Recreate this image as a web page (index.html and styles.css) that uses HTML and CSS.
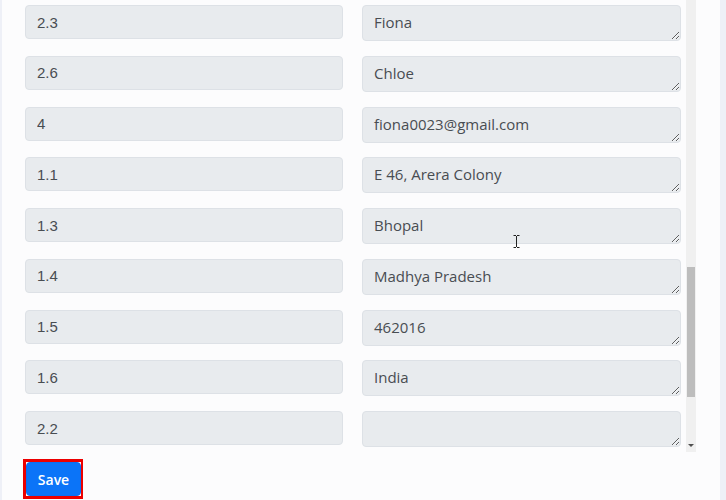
FILE: index.html
```html
<!DOCTYPE html>
<html lang="en">
<head>
    <meta charset="UTF-8">
    <title>Edit record</title>
    <link rel="stylesheet" href="styles.css">
</head>
<body>
<div class="page">
    <div class="scroller">
        <form class="fields">
            <input class="num" type="text" value="2.3" readonly>
            <textarea class="val" readonly>Fiona</textarea>
            <input class="num" type="text" value="2.6" readonly>
            <textarea class="val" readonly>Chloe</textarea>
            <input class="num" type="text" value="4" readonly>
            <textarea class="val" readonly>fiona0023@gmail.com</textarea>
            <input class="num" type="text" value="1.1" readonly>
            <textarea class="val" readonly>E 46, Arera Colony</textarea>
            <input class="num" type="text" value="1.3" readonly>
            <textarea class="val" readonly>Bhopal</textarea>
            <input class="num" type="text" value="1.4" readonly>
            <textarea class="val" readonly>Madhya Pradesh</textarea>
            <input class="num" type="text" value="1.5" readonly>
            <textarea class="val" readonly>462016</textarea>
            <input class="num" type="text" value="1.6" readonly>
            <textarea class="val" readonly>India</textarea>
            <input class="num" type="text" value="2.2" readonly>
            <textarea class="val" readonly></textarea>
        </form>
        <div class="bar">
            <div class="bar-top"></div>
            <div class="bar-thumb"></div>
            <div class="bar-rest"></div>
            <div class="bar-arrow"></div>
        </div>
    </div>
    <div class="actions">
        <span class="mark"><button class="save" type="button">Save</button></span>
    </div>
    <svg class="ibeam" width="7" height="13" viewBox="0 0 7 13">
        <path d="M0.5 0.5h2.5M4 0.5h2.5M3.5 1v11M0.5 12.5h2.5M4 12.5h2.5" stroke="#222" stroke-width="1" fill="none"/>
    </svg>
</div>
</body>
</html>
```

FILE: styles.css
```css
 *{
    box-sizing:border-box;
 }
 body{
    margin:0;
    background:#eef0f7;
 }
 .page{
    position:relative;
    margin:0 6px 0 2px;
    height:500px;
    background:#fcfcfd;
    overflow:hidden;
 }
 .scroller{
    display:flex;
    width:694px;
    height:452px;
 }
 .fields{
    flex:1;
    display:grid;
    grid-template-columns:318px 319px;
    grid-auto-rows:36px;
    column-gap:19px;
    row-gap:14.75px;
    align-items:start;
    align-content:start;
    padding:5px 0 0 23px;
    margin:0;
 }
 .num,
 .val{
    display:block;
    border:1px solid #dde1e6;
    border-radius:4px;
    background:#e8ebee;
    color:#484d52;
    padding:0 11px;
    margin:0;
    outline:none;
 }
 .num{
    height:34px;
    font-family:"Liberation Sans",Arial,sans-serif;
    font-size:15px;
 }
 .val{
    height:36px;
    resize:vertical;
    overflow:hidden;
    font-family:"Open Sans","Noto Sans",sans-serif;
    font-size:15px;
    line-height:22px;
    padding-top:5px;
 }
 .bar{
    width:10px;
    display:flex;
    flex-direction:column;
    background:#f0f0f0;
 }
 .bar-top{
    height:267px;
 }
 .bar-thumb{
    height:130px;
    margin:0 1px;
    background:#bdbdbd;
 }
 .bar-rest{
    flex:1;
 }
 .bar-arrow{
    height:14px;
    display:flex;
    justify-content:center;
    align-items:center;
 }
 .bar-arrow::after{
    content:"";
    border-left:3px solid transparent;
    border-right:3px solid transparent;
    border-top:3px solid #505050;
 }
 .actions{
    padding:7px 0 0 21px;
 }
 .mark{
    display:inline-block;
    border:3px solid #ec0000;
    border-right-width:2px;
    padding:0;
    line-height:0;
 }
 .save{
    width:55px;
    height:34px;
    border:1px solid #0b6ff2;
    border-radius:4px;
    background:#0b74f8;
    color:#fff;
    font-family:"Open Sans","Noto Sans",sans-serif;
    font-size:14px;
    font-weight:600;
    padding:0;
 }
 .ibeam{
    position:absolute;
    left:511px;
    top:235px;
 }
```
